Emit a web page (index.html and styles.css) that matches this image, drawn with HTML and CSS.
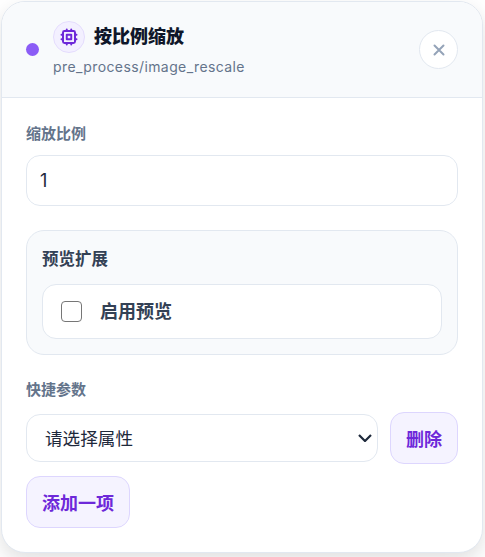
FILE: index.html
```html
<!DOCTYPE html>
<html lang="zh">
<head>
<meta charset="utf-8">
<title>按比例缩放</title>
<link rel="stylesheet" href="styles.css">
</head>
<body>
<section class="panel">
  <header class="head">
    <span class="dot"></span>
    <div class="head-main">
      <div class="title-row">
        <span class="icon-wrap">
          <svg width="18" height="18" viewBox="0 0 24 24" fill="none" stroke="#6d28d9" stroke-width="2.6" stroke-linecap="round" stroke-linejoin="round">
            <rect x="4" y="4" width="16" height="16" rx="2"/>
            <rect x="9" y="9" width="6" height="6"/>
            <path d="M15 2v2M15 20v2M2 15h2M2 9h2M20 15h2M20 9h2M9 2v2M9 20v2"/>
          </svg>
        </span>
        <h1 class="title">按比例缩放</h1>
      </div>
      <div class="subtitle">pre_process/image_rescale</div>
    </div>
    <button class="close" type="button" aria-label="关闭">
      <svg width="14" height="14" viewBox="0 0 14 14" fill="none" stroke="#94a3b8" stroke-width="2" stroke-linecap="round"><path d="M2.5 2.5l9 9M11.5 2.5l-9 9"/></svg>
    </button>
  </header>
  <div class="body">
    <div class="field">
      <label class="label" for="scale">缩放比例</label>
      <input class="input" id="scale" type="text" value="1">
    </div>
    <div class="group">
      <div class="group-title">预览扩展</div>
      <label class="check-row">
        <input class="check" type="checkbox">
        <span class="check-label">启用预览</span>
      </label>
    </div>
    <div class="field quick">
      <div class="label">快捷参数</div>
      <div class="quick-row">
        <div class="select-wrap">
          <select class="select"><option>请选择属性</option></select>
          <svg class="chevron" width="14" height="8" viewBox="0 0 14 8" fill="none" stroke="#1e293b" stroke-width="2.2"><path d="M1 1l6 6 6-6"/></svg>
        </div>
        <button class="btn" type="button">删除</button>
      </div>
      <div class="add-row"><button class="btn" type="button">添加一项</button></div>
    </div>
  </div>
</section>
</body>
</html>
```
FILE: styles.css
```css
* { box-sizing: border-box; }
html, body { margin: 0; height: 100%; }
body {
  background: #fff;
  padding: 1px 2px 0 1px;
  font-family: Inter, "Noto Sans CJK SC", sans-serif;
  overflow: hidden;
}
.panel {
  width: 482px;
  height: 552px;
  background: #fff;
  border: 1px solid #e2e8f0;
  border-radius: 24px;
  box-shadow: 0 8px 20px rgba(0, 0, 0, 0.12);
  overflow: hidden;
}
.head {
  height: 96px;
  display: flex;
  align-items: center;
  padding: 0 24px;
  background: #f8fafc;
  border-bottom: 1px solid #e2e8f0;
}
.dot {
  width: 13px;
  height: 13px;
  border-radius: 50%;
  background: #8b5cf6;
  flex: none;
}
.head-main { flex: 1; margin-left: 14px; margin-top: -2px; }
.title-row { display: flex; align-items: center; gap: 9px; }
.icon-wrap {
  width: 32px;
  height: 32px;
  border-radius: 50%;
  background: #f3f0ff;
  border: 1px solid #e4dcfd;
  display: flex;
  align-items: center;
  justify-content: center;
}
.title { margin: 0; font-size: 18px; font-weight: 900; color: #0f172a; line-height: 24px; }
.subtitle { margin-top: 5px; font-size: 14px; letter-spacing: 0.4px; line-height: 18px; color: #64748b; }
.close {
  width: 39px;
  height: 39px;
  padding: 0;
  border-radius: 50%;
  background: #fff;
  border: 1px solid #e2e8f0;
  display: flex;
  align-items: center;
  justify-content: center;
}
.body { padding: 26px 24px 0; }
.label {
  display: block;
  font-size: 15px;
  font-weight: 700;
  line-height: 20px;
  color: #64748b;
}
.input {
  display: block;
  width: 100%;
  height: 51px;
  margin-top: 11px;
  padding: 0 13px;
  border: 1px solid #e2e8f0;
  border-radius: 14px;
  font: 18px Inter, "Noto Sans CJK SC", sans-serif;
  color: #1e293b;
  background: #fff;
}
.group {
  margin-top: 24px;
  height: 125px;
  padding: 16px 15px;
  background: #f8fafc;
  border: 1px solid #e2e8f0;
  border-radius: 18px;
}
.group-title { font-size: 16.5px; font-weight: 700; line-height: 24px; color: #334155; }
.check-row {
  display: flex;
  align-items: center;
  height: 55px;
  margin-top: 13px;
  padding: 0 18px;
  background: #fff;
  border: 1px solid #e2e8f0;
  border-radius: 14px;
}
.check {
  width: 21px;
  height: 21px;
  margin: 0 18px 0 0;
  appearance: none;
  background: #fff;
  border: 1.5px solid #767676;
  border-radius: 4px;
}
.check-label { font-size: 18px; font-weight: 700; line-height: 24px; color: #334155; }
.quick { margin-top: 25px; }
.quick-row { display: flex; align-items: center; gap: 12px; margin-top: 12px; }
.select-wrap { position: relative; flex: 1; min-width: 0; }
.select {
  display: block;
  width: 100%;
  height: 48px;
  padding: 0 18px 2px;
  appearance: none;
  border: 1px solid #e2e8f0;
  border-radius: 14px;
  background: #fff;
  font: 17.6px "Noto Sans CJK SC", sans-serif;
  color: #1e293b;
}
.chevron { position: absolute; right: 6px; top: 20px; pointer-events: none; }
.btn {
  height: 52px;
  padding: 0 15px;
  border: 1px solid #ddd6fe;
  border-radius: 14px;
  background: #f5f3ff;
  color: #6d28d9;
  font: 700 18px "Noto Sans CJK SC", sans-serif;
}
.add-row { margin-top: 12px; }
```
